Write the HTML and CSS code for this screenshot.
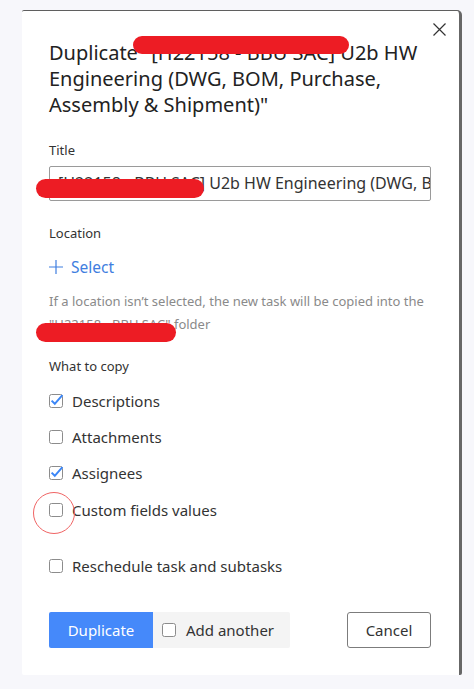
FILE: index.html
```html
<!DOCTYPE html>
<html lang="en">
<head>
<meta charset="utf-8">
<title>Duplicate task</title>
<link rel="stylesheet" href="styles.css">
</head>
<body>
<div class="dialog">
  <button class="close" aria-label="Close">
    <svg width="13" height="13" viewBox="0 0 13 13"><path d="M0.5 0.5 L12.5 12.5 M12.5 0.5 L0.5 12.5" stroke="#333" stroke-width="1.2" fill="none"/></svg>
  </button>
  <h1 class="heading">Duplicate "[H22158 - BBU SAC] U2b HW Engineering (DWG, BOM, Purchase, Assembly &amp; Shipment)"</h1>

  <div class="label label-title">Title</div>
  <div class="input">[H22158 - BBU SAC] U2b HW Engineering (DWG, BOM, Purchase, Assembly &amp; Shipment)</div>

  <div class="label label-location">Location</div>
  <div class="select">
    <svg width="14" height="14" viewBox="0 0 14 14"><path d="M7 0 V14 M0 7 H14" stroke="#3f7ee0" stroke-width="1.2" fill="none"/></svg>
    <span>Select</span>
  </div>
  <p class="hint">If a location isn’t selected, the new task will be copied into the "H22158 - BBU SAC" folder</p>

  <div class="label label-copy">What to copy</div>
  <div class="options">
    <div class="option">
      <svg class="cb" width="14" height="14" viewBox="0 0 14 14"><rect x="0.5" y="0.5" width="13" height="13" rx="2" fill="#fff" stroke="#8c8c8c"/><path d="M2.6 6.6 L5.8 9.8 L13.4 1.2" stroke="#3b86f7" stroke-width="2" fill="none"/></svg>
      <span>Descriptions</span>
    </div>
    <div class="option">
      <svg class="cb" width="14" height="14" viewBox="0 0 14 14"><rect x="0.5" y="0.5" width="13" height="13" rx="2" fill="#fff" stroke="#8c8c8c"/></svg>
      <span>Attachments</span>
    </div>
    <div class="option">
      <svg class="cb" width="14" height="14" viewBox="0 0 14 14"><rect x="0.5" y="0.5" width="13" height="13" rx="2" fill="#fff" stroke="#8c8c8c"/><path d="M2.6 6.6 L5.8 9.8 L13.4 1.2" stroke="#3b86f7" stroke-width="2" fill="none"/></svg>
      <span>Assignees</span>
    </div>
    <div class="option option-custom">
      <svg class="cb" width="14" height="14" viewBox="0 0 14 14"><rect x="0.5" y="0.5" width="13" height="13" rx="2" fill="#fff" stroke="#8c8c8c"/></svg>
      <span>Custom fields values</span>
    </div>
    <div class="option option-reschedule">
      <svg class="cb" width="14" height="14" viewBox="0 0 14 14"><rect x="0.5" y="0.5" width="13" height="13" rx="2" fill="#fff" stroke="#8c8c8c"/></svg>
      <span>Reschedule task and subtasks</span>
    </div>
  </div>

  <div class="footer">
    <div class="split">
      <button class="btn-primary">Duplicate</button>
      <div class="another">
        <svg class="cb" width="14" height="14" viewBox="0 0 14 14"><rect x="0.5" y="0.5" width="13" height="13" rx="2" fill="#fff" stroke="#8c8c8c"/></svg>
        <span>Add another</span>
      </div>
    </div>
    <button class="btn-cancel">Cancel</button>
  </div>

  <div class="mark mark-heading"></div>
  <div class="mark mark-title"></div>
  <div class="mark mark-hint"></div>
  <div class="ring"></div>
</div>
</body>
</html>
```

FILE: styles.css
```css
html, body {
  margin: 0;
  padding: 0;
}
body {
  background: #f7f7fb;
  font-family: "Noto Sans", "Open Sans", sans-serif;
  color: #2b2b2b;
  height: 689px;
  overflow: hidden;
}
.dialog {
  position: relative;
  box-sizing: border-box;
  margin: 10px 0 0 22px;
  width: 440px;
  height: 665px;
  background: #fff;
  border-top: 1px solid #5f5f5f;
  border-right: 3px solid #676767;
  border-radius: 2px 5px 2px 2px;
  padding: 29px 28px 0 27px;
}
.close {
  position: absolute;
  top: 12px;
  left: 411px;
  width: 13px;
  height: 13px;
  padding: 0;
  border: 0;
  background: none;
  display: block;
}
.close svg { display: block; }
.heading {
  margin: 0;
  font-size: 20px;
  line-height: 26px;
  font-weight: 400;
  color: #222;
}
.label {
  font-size: 13px;
  line-height: 18px;
  color: #333;
}
.label-title { margin-top: 23px; }
.input {
  box-sizing: border-box;
  margin-top: 7px;
  height: 35px;
  border: 1px solid #9a9a9a;
  border-radius: 2px;
  padding: 0 8px;
  font-size: 16px;
  line-height: 33px;
  color: #333;
  white-space: nowrap;
  overflow: hidden;
}
.label-location { margin-top: 23px; }
.select {
  margin-top: 14px;
  display: flex;
  align-items: center;
  gap: 8px;
  font-size: 15.5px;
  line-height: 22px;
  color: #3f7ee0;
}
.select svg { display: block; }
.hint {
  margin: 12px 0 0;
  font-size: 13px;
  line-height: 23px;
  color: #8a8a8a;
}
.label-copy { margin-top: 21px; }
.options {
  margin-top: 16px;
  display: flex;
  flex-direction: column;
  gap: 16px;
}
.option {
  display: flex;
  align-items: center;
  gap: 9px;
  font-size: 15px;
  line-height: 20px;
  color: #333;
}
.option-custom { margin-top: 1px; }
.option-reschedule { margin-top: 20px; }
.cb { display: block; flex: none; overflow: visible; }
.footer {
  margin-top: 36px;
  display: flex;
  justify-content: space-between;
  align-items: stretch;
  height: 36px;
}
.split {
  display: flex;
}
.btn-primary {
  width: 104px;
  border: 0;
  margin: 0;
  padding: 0;
  background: #4589fa;
  color: #fff;
  font-family: inherit;
  font-size: 15px;
  border-radius: 2px 0 0 2px;
}
.another {
  width: 137px;
  box-sizing: border-box;
  background: #f4f4f4;
  display: flex;
  align-items: center;
  gap: 10px;
  padding-left: 9px;
  font-size: 15px;
  color: #333;
  border-radius: 0 2px 2px 0;
}
.btn-cancel {
  width: 84px;
  margin: 0;
  padding: 0;
  background: #fff;
  border: 1px solid #7c7c7c;
  border-radius: 3px;
  font-family: inherit;
  font-size: 15px;
  color: #333;
}
.mark {
  position: absolute;
  background: #ed1c24;
  border-radius: 10px;
}
.mark-heading { left: 111px; top: 25px; width: 216px; height: 18px; }
.mark-title { left: 14px; top: 168px; width: 168px; height: 19px; }
.mark-hint { left: 14px; top: 312px; width: 140px; height: 19px; }
.ring {
  position: absolute;
  left: 11px;
  top: 481px;
  width: 40px;
  height: 40px;
  border: 1px solid #f06464;
  border-radius: 50%;
}
```
